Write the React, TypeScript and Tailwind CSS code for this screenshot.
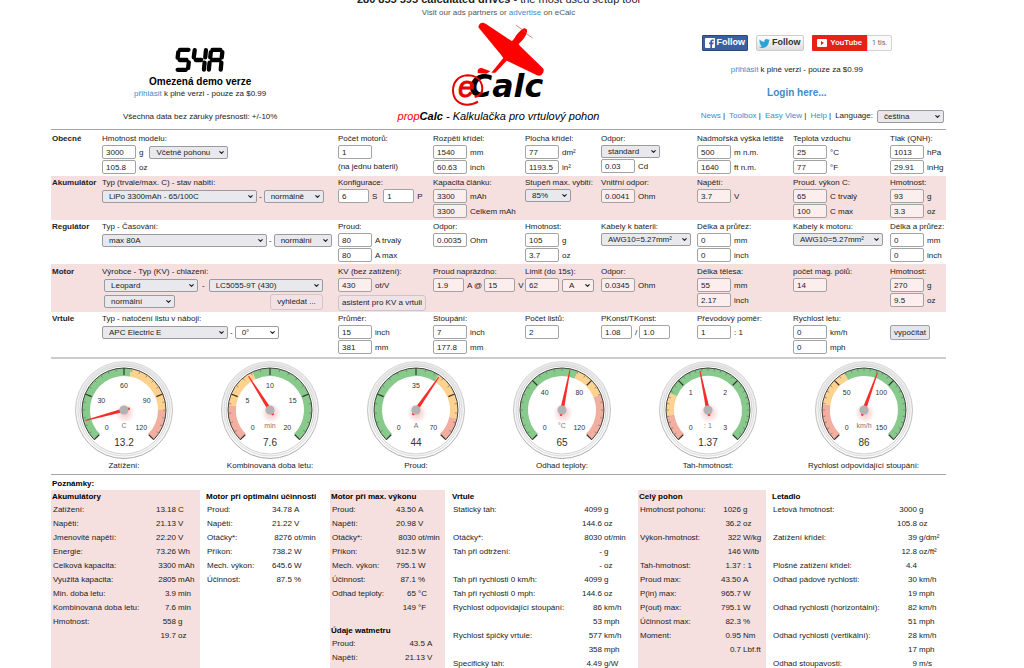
import React from "react";
import { ChevronDown } from "lucide-react";

type RowData = [label: string, value: string, unit: string];

type GaugeProps = {
    label: string;
    unit: string;
    value: number;
    max: number;
    marks: number[];
    majors: number;
    minors: number;
    bands: [color: string, until: number][];
};

const GREEN = "#87ca8b";
const AMBER = "#fdd28f";
const RED = "#f2ae9f";

/**
 * Drop-down with its own arrow.
 */
const Pick: React.FC<{
    id?: string;
    name: string;
    value: string;
    width: string;
    tone?: string;
}> = ({ id, name, value, width, tone = "bg-[#e9e9ed]" }) => (
    <span className={`relative inline-flex ${width}`}>
        <select
            id={id}
            aria-label={name}
            className={`h-[13px] w-full appearance-none rounded-[2px] border border-[#9a9a9f] pl-[6px] text-[8px] leading-[11px] text-[#222] ${tone}`}
        >
            <option>{value}</option>
        </select>
        <ChevronDown
            className="pointer-events-none absolute right-[3px] top-[3px] text-[#222]"
            size={7}
            strokeWidth={4}
        />
    </span>
);

/**
 * Short text box followed by its unit.
 */
const Num: React.FC<{
    id?: string;
    name: string;
    value: string;
    unit?: string;
    pink?: boolean;
    narrow?: boolean;
}> = ({ id, name, value, unit, pink, narrow }) => (
    <span className="inline-flex items-center gap-[3px] whitespace-nowrap">
        <input
            id={id}
            aria-label={`${name} ${unit ?? ""}`.trim()}
            defaultValue={value}
            className={`h-[14px] rounded-[2px] border border-[#a3a3a3] pl-[3px] text-[8px] leading-[12px] ${
                narrow ? "w-[31px]" : "w-[34px]"
            } ${pink ? "bg-[#fdeeee]" : "bg-white"}`}
        />
        {unit}
    </span>
);

const Cell: React.FC<{
    id?: string;
    label?: string;
    children?: React.ReactNode;
}> = ({ id, label, children }) => (
    <div className="flex min-w-0 flex-col items-start gap-px">
        <label htmlFor={id} className="-mb-px h-[13px] whitespace-nowrap">
            {label}
        </label>
        {children}
    </div>
);

const Line: React.FC<{ children: React.ReactNode; className?: string }> = ({
    children,
    className = "gap-1",
}) => (
    <div className={`flex h-[14px] items-center whitespace-nowrap ${className}`}>
        {children}
    </div>
);

const Row: React.FC<{
    title: string;
    className: string;
    children: React.ReactNode;
}> = ({ title, className, children }) => (
    <section
        className={`grid grid-cols-[51fr_236fr_95fr_92fr_76fr_96fr_96fr_97fr_56fr] leading-[13px] ${className}`}
    >
        <h2 className="pl-px font-bold">{title}</h2>
        {children}
    </section>
);

const Demo: React.FC = () => (
    <p className="leading-[11px]">
        <a href="#login" className="text-[#428bca]">
            přihlásit
        </a>{" "}
        k plné verzi - pouze za $0.99
    </p>
);

const Header: React.FC = () => (
    <header className="grid grid-cols-3 items-end border-b border-[#a5a5a5] pb-[6px] pt-[3px]">
        <div className="flex flex-col items-center">
            <svg
                width="50"
                height="26"
                viewBox="403 140 152 78"
                stroke="#000"
                strokeWidth="13"
                strokeLinecap="round"
                fill="none"
            >
                <path d="M418 148H444M413 155L411 172M417 179H438M445 186L443 203M411 209H436" />
                <path d="M463 149L460 171M466 179H483M497 149L495 171M493 187L491 208" />
                <path d="M517 148H541M512 155L510 171M547 155L545 171M516 179H538M508 187L506 208M544 187L542 208" />
            </svg>
            <p className="mt-[2px] text-[10px] font-bold leading-[13px] text-black">
                Omezená demo verze
            </p>
            <Demo />
            <p className="mt-[11px] leading-[13px]">
                Všechna data bez záruky přesnosti: +/-10%
            </p>
        </div>
        <div className="flex flex-col items-center">
            <svg width="92" height="84" viewBox="333 64 276 252">
                <g fill="#fe0000">
                    <path d="M412 80Q413 66 426 66L434 69L512 121Q517 119 524 106Q538 88 549 83Q560 84 558 93Q555 109 533 130L537 136L606 203Q612 211 602 222Q596 227 588 224L497 180L463 216H451L487 172L478 160Z" />
                    <path d="M410 210Q412 201 422 202L448 212L436 219L410 217Z" />
                    <path
                        d="M524 73L547 89L556 99L575 112"
                        stroke="#d44"
                        strokeWidth="2"
                        fill="none"
                    />
                </g>
                <text
                    x="384"
                    y="290"
                    fontSize="95"
                    fontWeight="bold"
                    fontStyle="italic"
                    fontFamily="DejaVu Sans, sans-serif"
                    fill="#000"
                >
                    Calc
                </text>
                <path
                    d="M401 289Q425 283 424 262C421 233 399 224 380 224C351 225 336 245 336 270C337 297 355 312 379 312Q397 312 411 303"
                    fill="none"
                    stroke="#e60000"
                    strokeWidth="6"
                />
                <text
                    x="352"
                    y="289"
                    fontSize="86"
                    fontStyle="italic"
                    fontFamily="Liberation Sans, sans-serif"
                    fill="#e60000"
                    stroke="#e60000"
                    strokeWidth="3"
                >
                    e
                </text>
            </svg>
            <p className="mt-[3px] text-[11px] italic leading-[14px] text-black">
                <span className="text-[#fe0000]">prop</span>
                <b>Calc</b> - Kalkulačka pro vrtulový pohon
            </p>
        </div>
        <div className="flex flex-col items-center">
            <div className="flex gap-2 font-bold">
                <button className="flex h-4 items-center gap-[2px] rounded-[1px] border border-[#29487d] bg-[#3a5fa3] px-[2px] text-[9px] text-white">
                    <svg width="10" height="10" viewBox="0 0 10 10">
                        <rect width="10" height="10" rx="1" fill="#fff" />
                        <path
                            d="M7 10V6.2H8.4L8.7 4.6H7V3.7Q7 3 7.8 3H8.7V1.5H7.4Q5.3 1.5 5.3 3.6V4.6H4.1V6.2H5.3V10Z"
                            fill="#3a5fa3"
                        />
                    </svg>
                    Follow
                </button>
                <button className="flex h-4 items-center gap-[2px] rounded-[2px] border border-[#ccc] bg-linear-to-b from-white to-[#dedede] px-[2px] text-[9px] text-[#333]">
                    <svg width="11" height="11" viewBox="0 0 24 24" fill="#2aa3d9">
                        <path d="M24 4.6c-.9.4-1.8.7-2.8.8 1-.6 1.8-1.6 2.2-2.7-1 .6-2 1-3.1 1.2a4.9 4.9 0 0 0-8.4 4.5C7.7 8.2 4.1 6.2 1.7 3.1a4.9 4.9 0 0 0 1.5 6.6c-.8 0-1.6-.2-2.2-.6v.1c0 2.4 1.7 4.4 3.9 4.8-.7.2-1.5.2-2.2.1.6 2 2.4 3.4 4.6 3.4A9.9 9.9 0 0 1 0 19.5 14 14 0 0 0 7.5 21.7c9.1 0 14-7.5 14-14v-.6c1-.7 1.8-1.6 2.5-2.5z" />
                    </svg>
                    Follow
                </button>
                <div className="flex h-4 font-normal">
                    <button className="flex items-center gap-1 rounded-l-[1px] bg-[#e62117] px-[5px] font-['Roboto',sans-serif] text-[8px] font-medium text-white">
                        <svg width="10" height="8" viewBox="0 0 10 8">
                            <rect width="10" height="8" rx="1" fill="#fff" />
                            <path d="M4 2L7 4L4 6Z" fill="#e62117" />
                        </svg>
                        YouTube
                    </button>
                    <span className="flex items-center rounded-r-[2px] border border-[#d3d3d3] bg-[#fafafa] px-1 font-['Roboto',sans-serif] text-[7px] text-[#666]">
                        1 tis.
                    </span>
                </div>
            </div>
            <div className="mt-[13px]">
                <Demo />
            </div>
            <a
                href="#login"
                className="mt-[11px] text-[10px] font-bold leading-[14px] text-[#428bca]"
            >
                Login here...
            </a>
            <nav className="mt-[9px] flex items-center gap-1 self-end whitespace-nowrap pr-[2px] leading-[14px]">
                <span>
                    <a href="#news" className="text-[#428bca]">News</a> |
                </span>
                <span>
                    <a href="#toolbox" className="text-[#428bca]">Toolbox</a> |
                </span>
                <span>
                    <a href="#easy" className="text-[#428bca]">Easy View</a> |
                </span>
                <span>
                    <a href="#help" className="text-[#428bca]">Help</a> |
                </span>
                <label htmlFor="lang">Language:</label>
                <Pick id="lang" name="Language" value="čeština" width="w-[67px]" />
            </nav>
        </div>
    </header>
);

const Form: React.FC = () => (
    <form className="mt-px border-b-2 border-[#cccccc]" onSubmit={(e) => e.preventDefault()}>
        <Row title="Obecné" className="pb-[2px] pt-px">
            <Cell id="mass" label="Hmotnost modelu:">
                <Line className="gap-[6px]">
                    <Num id="mass" name="Hmotnost modelu" value="3000" unit="g" />
                    <Pick name="Hmotnost" value="Včetně pohonu" width="w-[79px]" />
                </Line>
                <Num name="Hmotnost modelu" value="105.8" unit="oz" />
            </Cell>
            <Cell id="motors" label="Počet motorů:">
                <Num id="motors" name="Počet motorů" value="1" />
                <span>(na jednu baterii)</span>
            </Cell>
            <Cell id="span" label="Rozpětí křídel:">
                <Num id="span" name="Rozpětí křídel" value="1540" unit="mm" />
                <Num name="Rozpětí křídel" value="60.63" unit="inch" />
            </Cell>
            <Cell id="area" label="Plocha křídel:">
                <Num id="area" name="Plocha křídel" value="77" unit="dm²" />
                <Num name="Plocha křídel" value="1193.5" unit="in²" />
            </Cell>
            <Cell id="drag" label="Odpor:">
                <Pick id="drag" name="Odpor" value="standard" width="w-[59px]" />
                <Num name="Odpor" value="0.03" unit="Cd" />
            </Cell>
            <Cell id="elev" label="Nadmořská výška letiště">
                <Num id="elev" name="Nadmořská výška letiště" value="500" unit="m n.m." />
                <Num name="Nadmořská výška letiště" value="1640" unit="ft n.m." />
            </Cell>
            <Cell id="temp" label="Teplota vzduchu">
                <Num id="temp" name="Teplota vzduchu" value="25" unit="°C" />
                <Num name="Teplota vzduchu" value="77" unit="°F" />
            </Cell>
            <Cell id="qnh" label="Tlak (QNH):">
                <Num id="qnh" name="Tlak" value="1013" unit="hPa" />
                <Num name="Tlak" value="29.91" unit="inHg" />
            </Cell>
        </Row>

        <Row title="Akumulátor" className="bg-[#f6dfdf] pb-[2px]">
            <Cell id="cell" label="Typ (trvale/max. C) - stav nabití:">
                <Line className="gap-[2px]">
                    <Pick id="cell" name="Typ" value="LiPo 3300mAh - 65/100C" width="w-[155px]" />
                    -
                    <Pick name="Stav nabití" value="normálně" width="w-[60px]" />
                </Line>
            </Cell>
            <Cell id="config" label="Konfigurace:">
                <Line className="gap-[6px]">
                    <Num id="config" name="Konfigurace" value="6" unit="S" narrow />
                    <Num name="Konfigurace" value="1" unit="P" narrow />
                </Line>
            </Cell>
            <Cell id="cap" label="Kapacita článku:">
                <Num id="cap" name="Kapacita článku" value="3300" unit="mAh" pink />
                <Num name="Kapacita článku" value="3300" unit="Celkem mAh" pink />
            </Cell>
            <Cell id="dis" label="Stupeň max. vybití:">
                <Pick id="dis" name="Stupeň max. vybití" value="85%" width="w-[46px]" />
            </Cell>
            <Cell id="ri" label="Vnitřní odpor:">
                <Num id="ri" name="Vnitřní odpor" value="0.0041" unit="Ohm" pink />
            </Cell>
            <Cell id="volt" label="Napětí:">
                <Num id="volt" name="Napětí" value="3.7" unit="V" pink />
            </Cell>
            <Cell id="crate" label="Proud. výkon C:">
                <Num id="crate" name="Proud. výkon" value="65" unit="C trvalý" pink />
                <Num name="Proud. výkon" value="100" unit="C max" pink />
            </Cell>
            <Cell id="cellm" label="Hmotnost:">
                <Num id="cellm" name="Hmotnost" value="93" unit="g" pink />
                <Num name="Hmotnost" value="3.3" unit="oz" pink />
            </Cell>
        </Row>

        <Row title="Regulátor" className="pb-[2px]">
            <Cell id="esc" label="Typ - Časování:">
                <Line className="gap-[2px]">
                    <Pick id="esc" name="Typ" value="max 80A" width="w-[165px]" />
                    -
                    <Pick name="Časování" value="normální" width="w-[58px]" />
                </Line>
            </Cell>
            <Cell id="amp" label="Proud:">
                <Num id="amp" name="Proud" value="80" unit="A trvalý" />
                <Num name="Proud" value="80" unit="A max" />
            </Cell>
            <Cell id="escr" label="Odpor:">
                <Num id="escr" name="Odpor" value="0.0035" unit="Ohm" />
            </Cell>
            <Cell id="escm" label="Hmotnost:">
                <Num id="escm" name="Hmotnost" value="105" unit="g" />
                <Num name="Hmotnost" value="3.7" unit="oz" />
            </Cell>
            <Cell id="wireb" label="Kabely k baterii:">
                <Pick id="wireb" name="Kabely k baterii" value="AWG10=5.27mm²" width="w-[90px]" />
            </Cell>
            <Cell id="lenb" label="Délka a průřez:">
                <Num id="lenb" name="Délka" value="0" unit="mm" />
                <Num name="Délka" value="0" unit="inch" />
            </Cell>
            <Cell id="wirem" label="Kabely k motoru:">
                <Pick id="wirem" name="Kabely k motoru" value="AWG10=5.27mm²" width="w-[90px]" />
            </Cell>
            <Cell id="lenm" label="Délka a průřez:">
                <Num id="lenm" name="Délka" value="0" unit="mm" />
                <Num name="Délka" value="0" unit="inch" />
            </Cell>
        </Row>

        <Row title="Motor" className="bg-[#f6dfdf] pb-px pt-px">
            <Cell id="maker" label="Výrobce - Typ (KV) - chlazení:">
                <Line className="gap-1 pl-[2px]">
                    <Pick id="maker" name="Výrobce" value="Leopard" width="w-[94px]" />
                    -
                    <Pick name="Typ (KV)" value="LC5055-9T (430)" width="w-[114px]" />
                </Line>
                <Line className="w-[221px] justify-between pl-[2px] pt-[3px]">
                    <Pick name="Chlazení" value="normální" width="w-[71px]" />
                    <button className="h-4 w-[53px] rounded-[3px] border border-[#d3c4c8] bg-[#f3e2e5] text-[8px]">
                        vyhledat ...
                    </button>
                </Line>
            </Cell>
            <Cell id="kv" label="KV (bez zatížení):">
                <Num id="kv" name="KV" value="430" unit="ot/V" pink />
                <button className="mt-[2px] h-4 rounded-[3px] border border-[#d0c2c6] bg-[#efe3e7] px-[3px] text-[8px] leading-[14px] whitespace-nowrap">
                    asistent pro KV a vrtuli
                </button>
            </Cell>
            <Cell id="idle" label="Proud naprázdno:">
                <Line className="gap-[2px]">
                    <Num id="idle" name="Proud naprázdno" value="1.9" unit="A @" pink narrow />
                    <Num name="Proud naprázdno" value="15" unit="V" pink narrow />
                </Line>
            </Cell>
            <Cell id="limit" label="Limit (do 15s):">
                <Line className="gap-[3px]">
                    <Num id="limit" name="Limit" value="62" pink />
                    <Pick name="Jednotka" value="A" width="w-[32px]" tone="bg-[#fdeeee]" />
                </Line>
            </Cell>
            <Cell id="rm" label="Odpor:">
                <Num id="rm" name="Odpor" value="0.0345" unit="Ohm" pink />
            </Cell>
            <Cell id="case" label="Délka tělesa:">
                <Num id="case" name="Délka tělesa" value="55" unit="mm" pink />
                <Num name="Délka tělesa" value="2.17" unit="inch" pink />
            </Cell>
            <Cell id="poles" label="počet mag. pólů:">
                <Num id="poles" name="Počet mag. pólů" value="14" pink />
            </Cell>
            <Cell id="motm" label="Hmotnost:">
                <Num id="motm" name="Hmotnost" value="270" unit="g" pink />
                <Num name="Hmotnost" value="9.5" unit="oz" pink />
            </Cell>
        </Row>

        <Row title="Vrtule" className="pb-[3px]">
            <Cell id="prop" label="Typ - natočení listu v náboji:">
                <Line className="gap-[2px]">
                    <Pick id="prop" name="Typ" value="APC Electric E" width="w-[126px]" />
                    -
                    <Pick name="Natočení" value="0°" width="w-[44px]" tone="bg-white" />
                </Line>
            </Cell>
            <Cell id="dia" label="Průměr:">
                <Num id="dia" name="Průměr" value="15" unit="inch" />
                <Num name="Průměr" value="381" unit="mm" />
            </Cell>
            <Cell id="pitch" label="Stoupání:">
                <Num id="pitch" name="Stoupání" value="7" unit="inch" />
                <Num name="Stoupání" value="177.8" unit="mm" />
            </Cell>
            <Cell id="blades" label="Počet listů:">
                <Num id="blades" name="Počet listů" value="2" />
            </Cell>
            <Cell id="pconst" label="PKonst/TKonst:">
                <Line className="gap-[2px]">
                    <Num id="pconst" name="PKonst" value="1.08" unit="/" narrow />
                    <Num name="TKonst" value="1.0" narrow />
                </Line>
            </Cell>
            <Cell id="gear" label="Převodový poměr:">
                <Num id="gear" name="Převodový poměr" value="1" unit=": 1" />
            </Cell>
            <Cell id="speed" label="Rychlost letu:">
                <Num id="speed" name="Rychlost letu" value="0" unit="km/h" />
                <Num name="Rychlost letu" value="0" unit="mph" />
            </Cell>
            <Cell>
                <button className="h-[15px] rounded-[2px] border border-[#a0a0a8] bg-[#e6e4ec] px-[3px] text-[8px] leading-[12px]">
                    vypočítat
                </button>
            </Cell>
        </Row>
    </form>
);

// 0 degrees points up, angles grow clockwise
const point = (r: number, deg: number) => {
    const a = (deg * Math.PI) / 180;
    return `${(49 + r * Math.sin(a)).toFixed(2)} ${(49 - r * Math.cos(a)).toFixed(2)}`;
};

const arc = (r: number, from: number, to: number) =>
    `M${point(r, from)}A${r} ${r} 0 ${to - from > 180 ? 1 : 0} 1 ${point(r, to)}`;

const Gauge: React.FC<GaugeProps> = ({
    label,
    unit,
    value,
    max,
    marks,
    majors,
    minors,
    bands,
}) => {
    const step = 270 / (majors * minors);
    const ticks = Array.from({ length: majors * minors + 1 }, (_, i) => i);
    return (
        <figure className="flex flex-col items-center">
            <svg
                width="98"
                height="99"
                viewBox="0 0 98 99"
                fontFamily="Liberation Sans, Arial, sans-serif"
                textAnchor="middle"
            >
                <defs>
                    <linearGradient id="rim" x1="0" y1="0" x2="0" y2="1">
                        <stop offset="0" stopColor="#dedede" />
                        <stop offset="1" stopColor="#a9a9a9" />
                    </linearGradient>
                    <linearGradient id="bezel" x1="0" y1="0" x2="0" y2="1">
                        <stop offset="0" stopColor="#e6e6e6" />
                        <stop offset="0.5" stopColor="#f4f4f4" />
                        <stop offset="1" stopColor="#fafafa" />
                    </linearGradient>
                    <radialGradient id="glow">
                        <stop offset="0" stopColor="#d33" stopOpacity="0.3" />
                        <stop offset="1" stopColor="#d33" stopOpacity="0" />
                    </radialGradient>
                </defs>
                <circle cx="49" cy="49" r="48.5" fill="url(#bezel)" stroke="url(#rim)" />
                <circle cx="49" cy="49" r="46" fill="none" stroke="#dcdcdc" />
                <circle cx="49" cy="49" r="44" fill="#fff" stroke="#d0d0d0" />
                {bands.map(([color, until], i) => (
                    <path
                        key={until}
                        d={arc(38, i ? bands[i - 1][1] : -135, until)}
                        fill="none"
                        stroke={color}
                        strokeWidth="8"
                    />
                ))}
                <path d={arc(42, -135, 135)} fill="none" stroke="#444" />
                {ticks.map((i) => {
                    const big = i % minors === 0;
                    const deg = -135 + i * step;
                    return (
                        <path
                            key={i}
                            d={`M${point(42, deg)}L${point(big ? 35 : 39, deg)}`}
                            stroke={big ? "#333" : "#666"}
                            strokeWidth={big ? 1.2 : 0.6}
                        />
                    );
                })}
                {marks.map((m) => {
                    const [x, y] = point(24.5, -135 + (270 * m) / max).split(" ");
                    return (
                        <text key={m} x={x} y={Number(y) + 2.5} fontSize="7" fill="#333">
                            {m}
                        </text>
                    );
                })}
                <text x="49" y="67" fontSize="7" fill="#777">
                    {unit}
                </text>
                <text x="49" y="85" fontSize="10" fill="#333">
                    {value}
                </text>
                <circle cx="50" cy="52" r="10" fill="url(#glow)" />
                <g transform={`rotate(${-135 + (270 * value) / max} 49 49)`}>
                    <path d="M47.1 50L48.5 9H49.5L50.9 50L50 55H48Z" fill="#f92c2c" />
                </g>
                <circle cx="49" cy="49" r="4.6" fill="#b3b3b3" />
            </svg>
            <figcaption className="leading-[11px]">{label}</figcaption>
        </figure>
    );
};

const GAUGES: GaugeProps[] = [
    { label: "Zatížení:", unit: "C", value: 13.2, max: 120, marks: [0, 30, 60, 90, 120], majors: 4, minors: 6, bands: [[GREEN, 10], [AMBER, 90], [RED, 135]] },
    { label: "Kombinovaná doba letu:", unit: "min", value: 7.6, max: 20, marks: [0, 5, 10, 15, 20], majors: 4, minors: 5, bands: [[RED, -83], [AMBER, -25], [GREEN, 135]] },
    { label: "Proud:", unit: "A", value: 44, max: 70, marks: [0, 35, 70], majors: 4, minors: 5, bands: [[GREEN, 33], [AMBER, 102], [RED, 135]] },
    { label: "Odhad teploty:", unit: "°C", value: 65, max: 120, marks: [0, 40, 80, 120], majors: 3, minors: 8, bands: [[GREEN, 22], [AMBER, 68], [RED, 135]] },
    { label: "Tah-hmotnost:", unit: ": 1", value: 1.37, max: 3, marks: [0, 1, 2, 3], majors: 3, minors: 10, bands: [[RED, -98], [AMBER, -66], [GREEN, 135]] },
    { label: "Rychlost odpovídající stoupání:", unit: "km/h", value: 86, max: 150, marks: [0, 50, 100, 150], majors: 3, minors: 10, bands: [[RED, -82], [AMBER, -28], [GREEN, 135]] },
];

/**
 * Result list: name, right-aligned value, unit.
 */
const Results: React.FC<{ title: string; rows: RowData[]; unitWidth: string }> = ({
    title,
    rows,
    unitWidth,
}) => (
    <table className="w-full border-collapse whitespace-nowrap">
        <caption className="h-3 pl-px text-left font-bold leading-[14px] text-black">
            {title}
        </caption>
        <tbody>
            {rows.map(([label, value, unit], i) => (
                <tr key={i} className="h-[14px] leading-[13px]">
                    <th scope="row" className="w-px p-0 pl-[2px] text-left font-normal">
                        {label}
                    </th>
                    <td className="p-0 text-right">{value}</td>
                    <td className={`p-0 pl-[2px] ${unitWidth}`}>{unit}</td>
                </tr>
            ))}
        </tbody>
    </table>
);

const BATTERY: RowData[] = [
    ["Zatížení:", "13.18", "C"],
    ["Napětí:", "21.13", "V"],
    ["Jmenovité napětí:", "22.20", "V"],
    ["Energie:", "73.26", "Wh"],
    ["Celková kapacita:", "3300", "mAh"],
    ["Využitá kapacita:", "2805", "mAh"],
    ["Min. doba letu:", "3.9", "min"],
    ["Kombinovaná doba letu:", "7.6", "min"],
    ["Hmotnost:", "558", "g"],
    ["", "19.7", "oz"],
];

const OPTIMUM: RowData[] = [
    ["Proud:", "34.78", "A"],
    ["Napětí:", "21.22", "V"],
    ["Otáčky*:", "8276", "ot/min"],
    ["Příkon:", "738.2", "W"],
    ["Mech. výkon:", "645.6", "W"],
    ["Účinnost:", "87.5", "%"],
];

const MAXIMUM: RowData[] = [
    ["Proud:", "43.50", "A"],
    ["Napětí:", "20.98", "V"],
    ["Otáčky*:", "8030", "ot/min"],
    ["Příkon:", "912.5", "W"],
    ["Mech. výkon:", "795.1", "W"],
    ["Účinnost:", "87.1", "%"],
    ["Odhad teploty:", "65", "°C"],
    ["", "149", "°F"],
];

const WATTMETER: RowData[] = [
    ["Proud:", "43.5", "A"],
    ["Napětí:", "21.13", "V"],
];

const PROPELLER: RowData[] = [
    ["Statický tah:", "4099", "g"],
    ["", "144.6", "oz"],
    ["Otáčky*:", "8030", "ot/min"],
    ["Tah při odtržení:", "-", "g"],
    ["", "-", "oz"],
    ["Tah při rychlosti 0 km/h:", "4099", "g"],
    ["Tah při rychlosti 0 mph:", "144.6", "oz"],
    ["Rychlost odpovídající stoupání:", "86", "km/h"],
    ["", "53", "mph"],
    ["Rychlost špičky vrtule:", "577", "km/h"],
    ["", "358", "mph"],
    ["Specifický tah:", "4.49", "g/W"],
];

const DRIVE: RowData[] = [
    ["Hmotnost pohonu:", "1026", "g"],
    ["", "36.2", "oz"],
    ["Výkon-hmotnost:", "322", "W/kg"],
    ["", "146", "W/lb"],
    ["Tah-hmotnost:", "1.37", ": 1"],
    ["Proud max:", "43.50", "A"],
    ["P(in) max:", "965.7", "W"],
    ["P(out) max:", "795.1", "W"],
    ["Účinnost max:", "82.3", "%"],
    ["Moment:", "0.95", "Nm"],
    ["", "0.7", "Lbf.ft"],
];

const PLANE: RowData[] = [
    ["Letová hmotnost:", "3000", "g"],
    ["", "105.8", "oz"],
    ["Zatížení křídel:", "39", "g/dm²"],
    ["", "12.8", "oz/ft²"],
    ["Plošné zatížení křídel:", "4.4", ""],
    ["Odhad pádové rychlosti:", "30", "km/h"],
    ["", "19", "mph"],
    ["Odhad rychlosti (horizontální):", "82", "km/h"],
    ["", "51", "mph"],
    ["Odhad rychlosti (vertikální):", "28", "km/h"],
    ["", "17", "mph"],
    ["Odhad stoupavosti:", "9", "m/s"],
];

export default function App() {
    return (
        <div className="h-screen overflow-hidden bg-white font-['Liberation_Sans',Arial,sans-serif] text-[8px] text-[#222]">
            <main className="-mt-2 pl-[51px] pr-[78px]">
                <div className="text-center">
                    <p className="text-[11px] leading-[14px]">
                        <b>280 855 595 calculated drives</b> - the most used setup tool
                    </p>
                    <p className="leading-[13px] text-[#555]">
                        Visit our ads partners or{" "}
                        <a href="#ads" className="text-[#428bca]">
                            advertise
                        </a>{" "}
                        on eCalc
                    </p>
                </div>
                <Header />
                <Form />
                <div className="grid grid-cols-[146fr_146fr_146fr_146fr_146fr_165fr] border-b border-[#a5a5a5] pb-[3px] pt-[2px]">
                    {GAUGES.map((g) => (
                        <Gauge key={g.label} {...g} />
                    ))}
                </div>
                <h2 className="pl-px pt-[2px] font-bold leading-[13px] text-black">
                    Poznámky:
                </h2>
                <div className="grid min-h-48 grid-cols-[149fr_130fr_115fr_193fr_128fr_180fr]">
                    <div className="bg-[#f6dfdf]">
                        <Results title="Akumulátory" rows={BATTERY} unitWidth="w-[24px]" />
                    </div>
                    <div className="pl-[5px]">
                        <Results title="Motor při optimální účinnosti" rows={OPTIMUM} unitWidth="w-[38px]" />
                    </div>
                    <div className="flex flex-col gap-[10px] bg-[#f6dfdf]">
                        <Results title="Motor při max. výkonu" rows={MAXIMUM} unitWidth="w-[29px]" />
                        <Results title="Údaje watmetru" rows={WATTMETER} unitWidth="w-[20px]" />
                    </div>
                    <div className="pl-[6px]">
                        <Results title="Vrtule" rows={PROPELLER} unitWidth="w-[36px]" />
                    </div>
                    <div className="bg-[#f6dfdf]">
                        <Results title="Celý pohon" rows={DRIVE} unitWidth="w-[25px]" />
                    </div>
                    <div className="pl-[5px]">
                        <Results title="Letadlo" rows={PLANE} unitWidth="w-[29px]" />
                    </div>
                </div>
            </main>
        </div>
    );
}
